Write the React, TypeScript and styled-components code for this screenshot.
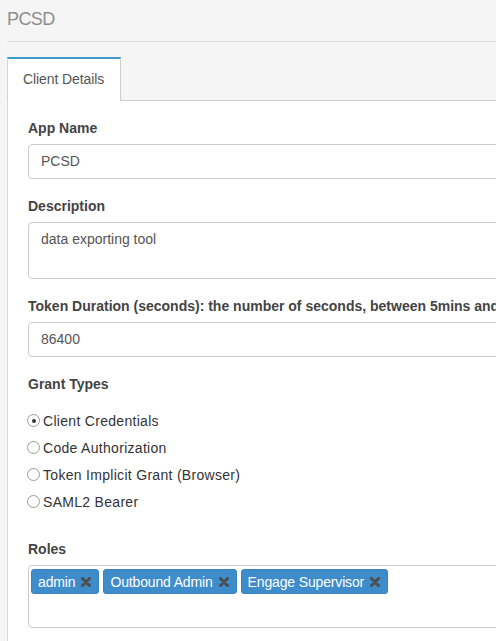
import React from "react";
import styled, { createGlobalStyle } from "styled-components";

const Global = createGlobalStyle`
  html, body { margin: 0; padding: 0; }
  body {
    background: #f5f5f5;
    overflow: hidden;
    font-family: "Liberation Sans", Arial, sans-serif;
    font-size: 14px;
    color: #333;
  }
`;

const Page = styled.div`
  padding-left: 7px;
  width: 1000px;
  min-height: 641px;
`;

const Header = styled.div`
  height: 41px;
  line-height: 39px;
  font-size: 18px;
  color: #8e8e8e;
  border-bottom: 1px solid #dcdcdc;
  letter-spacing: -0.6px;
`;

const TabBar = styled.div`
  margin-top: 15px;
  display: flex;
  border-bottom: 1px solid #cfcfcf;
  height: 43px;
`;

const Tab = styled.div<{ $active?: boolean }>`
  box-sizing: border-box;
  width: 114px;
  height: 44px;
  margin-bottom: -1px;
  padding: 10px 0 0 15px;
  line-height: 20px;
  color: #555;
  letter-spacing: -0.1px;
  background: ${(p) => (p.$active ? "#fff" : "transparent")};
  border-top: 2px solid #3c9bcb;
  border-left: 1px solid #d6d6d6;
  border-right: 1px solid #cfcfcf;
`;

const Panel = styled.div`
  background: #fff;
  border-left: 1px solid #dcdcdc;
  padding: 17px 0 40px 20px;
  min-height: 560px;
`;

const Group = styled.div<{ $top?: number }>`
  margin-top: ${(p) => p.$top ?? 0}px;
  margin-bottom: 17px;
`;

const Label = styled.div<{ $gap?: number }>`
  font-weight: bold;
  color: #444;
  line-height: 20px;
  white-space: nowrap;
  margin-bottom: ${(p) => (p.$gap ?? 6)}px;
`;

const Field = styled.div<{ $h: number }>`
  box-sizing: border-box;
  height: ${(p) => p.$h}px;
  width: 800px;
  border: 1px solid #cccccc;
  border-radius: 4px;
  padding: 6px 12px;
  line-height: 20px;
  color: #555;
`;

const RadioList = styled.div`
  display: flex;
  flex-direction: column;
  margin-left: -1px;
`;

const RadioRow = styled.label`
  display: flex;
  align-items: center;
  height: 27px;
  gap: 3px;
  color: #333;
  letter-spacing: 0.3px;
`;

const RadioDot = styled.span<{ $checked?: boolean }>`
  box-sizing: border-box;
  width: 13px;
  height: 13px;
  border-radius: 50%;
  border: 1px solid #9a9a9a;
  background: #fff;
  display: flex;
  align-items: center;
  justify-content: center;
  &::after {
    content: "";
    width: 4px;
    height: 4px;
    border-radius: 50%;
    background: ${(p) => (p.$checked ? "#333" : "transparent")};
  }
`;

const RolesBox = styled.div`
  box-sizing: border-box;
  height: 63px;
  width: 800px;
  border: 1px solid #cccccc;
  border-radius: 4px;
  padding: 3px 2px;
  display: flex;
  align-items: flex-start;
  gap: 4px;
`;

const Tag = styled.span`
  display: inline-flex;
  align-items: center;
  height: 25px;
  padding: 0 7px 0 6px;
  gap: 6px;
  background: #3f8ccb;
  border: 1px solid #3a82bf;
  box-sizing: border-box;
  border-radius: 3px;
  color: #fff;
  letter-spacing: -0.15px;
`;

const Remove = () => (
  <svg width="10" height="10" viewBox="0 0 10 10">
    <path d="M1.5 1.5 L8.5 8.5 M8.5 1.5 L1.5 8.5" stroke="#4d4d4d" strokeWidth="3" strokeLinecap="round" />
  </svg>
);

const grants = [
  { name: "Client Credentials", checked: true },
  { name: "Code Authorization" },
  { name: "Token Implicit Grant (Browser)" },
  { name: "SAML2 Bearer" },
];

const roles = ["admin", "Outbound Admin", "Engage Supervisor"];

export default function App() {
  return (
    <>
      <Global />
      <Page>
        <Header>PCSD</Header>
        <TabBar>
          <Tab $active>Client Details</Tab>
        </TabBar>
        <Panel>
          <Group>
            <Label>App Name</Label>
            <Field $h={35}>PCSD</Field>
          </Group>
          <Group>
            <Label>Description</Label>
            <Field $h={57}>data exporting tool</Field>
          </Group>
          <Group>
            <Label>Token Duration (seconds): the number of seconds, between 5mins and 48hrs</Label>
            <Field $h={35}>86400</Field>
          </Group>
          <Group>
            <Label $gap={13}>Grant Types</Label>
            <RadioList>
              {grants.map((g) => (
                <RadioRow key={g.name}>
                  <RadioDot $checked={g.checked} />
                  {g.name}
                </RadioRow>
              ))}
            </RadioList>
          </Group>
          <Group $top={24}>
            <Label>Roles</Label>
            <RolesBox>
              {roles.map((r) => (
                <Tag key={r}>
                  {r}
                  <Remove />
                </Tag>
              ))}
            </RolesBox>
          </Group>
        </Panel>
      </Page>
    </>
  );
}
